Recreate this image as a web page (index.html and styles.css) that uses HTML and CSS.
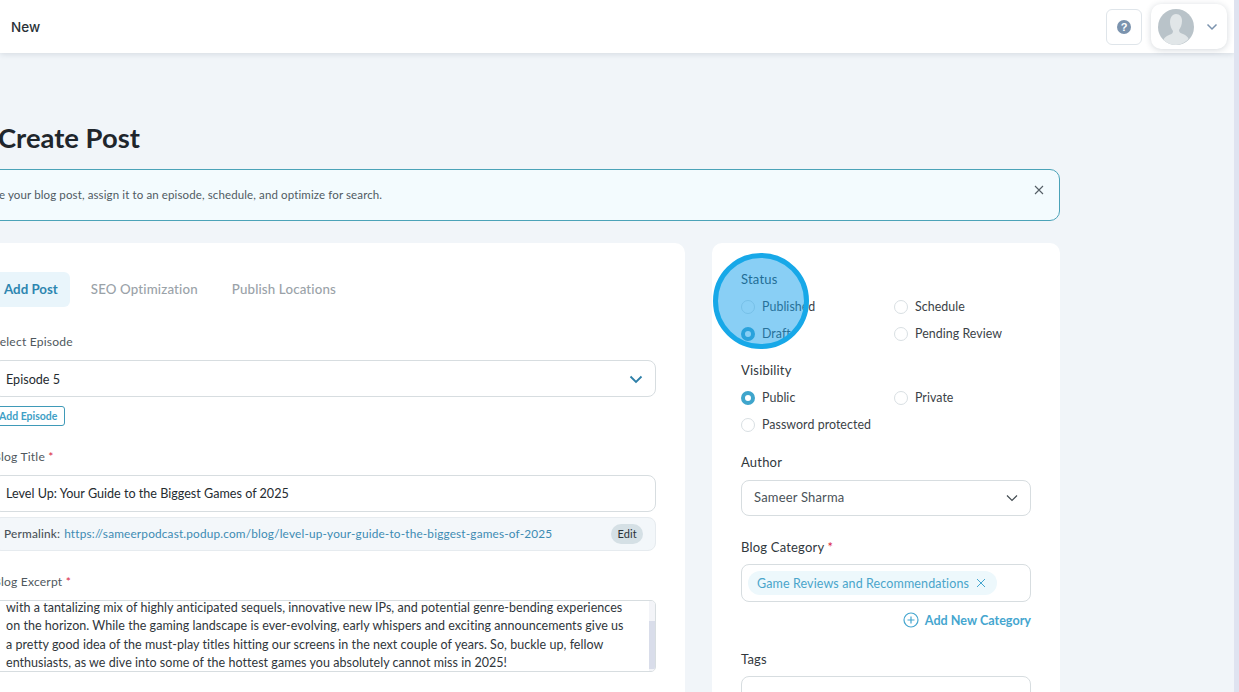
FILE: index.html
```html
<!DOCTYPE html>
<html lang="en">
<head>
  <meta charset="UTF-8" />
  <title>Create Post</title>
  <link rel="stylesheet" href="styles.css">
</head>
<body>
  <div class="app">
    <header class="topbar">
      <span class="crumb-sep">›</span>
      <span class="crumb">New</span>
      <div class="topbar-right">
        <button class="help-btn" aria-label="Help">
          <svg width="16" height="16" viewBox="0 0 16 16">
            <circle cx="8" cy="8" r="7" fill="#7b93ae"/>
            <text x="8" y="12" class="help-mark" text-anchor="middle">?</text>
          </svg>
        </button>
        <div class="user-menu">
          <svg class="avatar" width="36" height="36" viewBox="0 0 36 36">
            <circle cx="18" cy="18" r="18" fill="#b9c3c9"/>
            <path d="M18 5c4 0 6 3 6 7 0 4-1.500 7-3 9 0 2 1 3 4 4 3 1 5 3 5.500 5A18 18 0 0 1 18 36a18 18 0 0 1-12.500-5c.5-2 2.500-4 5.500-5 3-1 4-2 4-4-1.500-2-3-5-3-9 0-4 2-8 6-8z" fill="#e1e6e8"/>
          </svg>
          <svg class="user-caret" width="12" height="8" viewBox="0 0 12 8"><path d="M1.500 1.500 6 6l4.500-4.500" fill="none" stroke="#7b93ae" stroke-width="1.500"/></svg>
        </div>
      </div>
    </header>

    <main class="page">
      <h1 class="page-title">Create Post</h1>

      <div class="notice">
        <p>Create your blog post, assign it to an episode, schedule, and optimize for search.</p>
        <svg width="10" height="10" viewBox="0 0 10 10"><path d="M1 1l8 8m0-8l-8 8" stroke="#555f66" stroke-width="1.100"/></svg>
      </div>

      <div class="columns">
        <section class="card card-main">
          <nav class="tabs">
            <span class="tab active">Add Post</span>
            <span class="tab">SEO Optimization</span>
            <span class="tab">Publish Locations</span>
          </nav>

          <label class="field-label">Select Episode</label>
          <div class="input select">
            <span>Episode 5</span>
            <svg width="14" height="9" viewBox="0 0 14 9"><path d="M1.500 1.500 7 7l5.500-5.500" fill="none" stroke="#2d7fa8" stroke-width="1.800"/></svg>
          </div>
          <button class="btn-outline">Add Episode</button>

          <label class="field-label">Blog Title <span class="req">*</span></label>
          <div class="input"><span>Level Up: Your Guide to the Biggest Games of 2025</span></div>
          <div class="permalink">
            <b>Permalink:</b>
            <a>https://sameerpodcast.podup.com/blog/level-up-your-guide-to-the-biggest-games-of-2025</a>
            <span class="edit-pill">Edit</span>
          </div>

          <label class="field-label">Blog Excerpt <span class="req">*</span></label>
          <div class="textarea">
            <div class="textarea-lines">
              <div>with a tantalizing mix of highly anticipated sequels, innovative new IPs, and potential genre-bending experiences</div>
              <div>on the horizon. While the gaming landscape is ever-evolving, early whispers and exciting announcements give us</div>
              <div>a pretty good idea of the must-play titles hitting our screens in the next couple of years. So, buckle up, fellow</div>
              <div>enthusiasts, as we dive into some of the hottest games you absolutely cannot miss in 2025!</div>
            </div>
            <div class="scroll-track"><div class="scroll-thumb"></div></div>
          </div>
        </section>

        <aside class="card card-side">
          <label class="side-label status-label">Status</label>
          <div class="radio-grid">
            <div class="radio"><i></i>Published</div>
            <div class="radio"><i></i>Schedule</div>
            <div class="radio"><i class="on"></i>Draft</div>
            <div class="radio"><i></i>Pending Review</div>
          </div>

          <label class="side-label vis-label">Visibility</label>
          <div class="radio-grid">
            <div class="radio"><i class="on"></i>Public</div>
            <div class="radio"><i></i>Private</div>
            <div class="radio"><i></i>Password protected</div>
          </div>

          <label class="side-label author-label">Author</label>
          <div class="input side-select">
            <span>Sameer Sharma</span>
            <svg width="12" height="8" viewBox="0 0 12 8"><path d="M1 1.500 6 6.500l5-5" fill="none" stroke="#444c52" stroke-width="1.200"/></svg>
          </div>

          <label class="side-label cat-label">Blog Category <span class="req">*</span></label>
          <div class="tag-box">
            <span class="tag">Game Reviews and Recommendations
              <svg width="10" height="10" viewBox="0 0 10 10"><path d="M1 1l8 8m0-8L1 9" stroke="#45a6cf" stroke-width="1"/></svg>
            </span>
          </div>
          <div class="add-cat">
            <svg width="16" height="16" viewBox="0 0 16 16"><circle cx="8" cy="8" r="7" fill="none" stroke="#45a6cf" stroke-width="1.200"/><path d="M8 4.500v7M4.500 8h7" stroke="#45a6cf" stroke-width="1.200"/></svg>
            Add New Category
          </div>

          <label class="side-label tags-label">Tags</label>
          <div class="input tags-input"></div>
        </aside>
      </div>
    </main>
  </div>

  <div class="click-spot"></div>
  <div class="page-scrollbar"></div>
</body>
</html>
```

FILE: styles.css
```css
* {
  margin: 0;
  padding: 0;
  box-sizing: border-box;
}

html, body {
  height: 692px;
  overflow: hidden;
}

body {
  font-family: 'Lato', 'Noto Sans', sans-serif;
  background: #f1f5f9;
  color: #21272c;
}

.app {
  width: 1234px;
  height: 692px;
  overflow: hidden;
}

/* top bar */
.topbar {
  height: 53px;
  background: white;
  box-shadow: 0 1px 6px rgba(40,60,80,0.15);
  display: flex;
  align-items: center;
  padding-right: 7px;
  position: relative;
}

.crumb-sep {
  width: 11px;
  margin-left: -4px;
  margin-right: 4px;
  color: #8b959d;
  font-size: 14px;
}

.crumb {
  font-family: 'Inter', sans-serif;
  font-size: 13.500px;
  font-weight: 500;
  color: #2a3238;
}

.topbar-right {
  margin-left: auto;
  display: flex;
  align-items: flex-start;
  gap: 9px;
  height: 53px;
  padding-top: 4px;
}

.help-btn {
  width: 36px;
  height: 36px;
  margin-top: 5px;
  background: white;
  border: 1px solid #dfe5ea;
  border-radius: 6px;
  display: flex;
  align-items: center;
  justify-content: center;
}

.help-mark {
  font-family: 'Liberation Sans', sans-serif;
  font-size: 11px;
  font-weight: 700;
  fill: white;
}

.user-menu {
  width: 76px;
  height: 45px;
  background: white;
  border-radius: 10px;
  box-shadow: 0 1px 6px rgba(40,60,80,0.2);
  display: flex;
  align-items: center;
  padding-left: 7px;
  gap: 12px;
}

/* page */
.page {
  margin-left: -36px;
  width: 1096px;
}

.page-title {
  font-size: 27.400px;
  font-weight: 700;
  line-height: 34px;
  margin-top: 68px;
  padding-left: 34px;
  color: #1f262c;
}

.notice {
  margin-top: 14px;
  height: 52px;
  background: #f3fbfe;
  border: 1px solid #4ba3b8;
  border-radius: 10px;
  display: flex;
  align-items: center;
  justify-content: space-between;
  padding: 0 15px 0 6px;
  font-size: 11.500px;
  color: #4f5a62;
  letter-spacing: 0.12px;
}

.notice p {
  padding-bottom: 2px;
}

.notice svg {
  margin-top: -10px;
}

.columns {
  display: flex;
  gap: 27px;
  margin-top: 22px;
  align-items: flex-start;
}

.card {
  background: white;
  border-radius: 10px;
  padding: 29px;
  height: 520px;
}

.card-main {
  width: 721px;
}

.card-side {
  width: 348px;
  padding-top: 28px;
}

/* tabs */
.tabs {
  display: flex;
  gap: 8px;
  margin-bottom: 26px;
}

.tab {
  height: 35px;
  line-height: 35px;
  padding: 0 13px;
  border-radius: 6px;
  font-size: 13.300px;
  font-weight: 500;
  color: #9aa2a8;
  letter-spacing: 0.15px;
}

.tab.active {
  background: #e9f5fb;
  color: #2d86b0;
  font-weight: 700;
  padding: 0 12px 0 11px;
  letter-spacing: 0;
}

.field-label {
  display: block;
  font-size: 12.100px;
  line-height: 18px;
  color: #4f585e;
  letter-spacing: 0.2px;
  margin-bottom: 9px;
}

.req {
  color: #d9263f;
}

.input {
  height: 37px;
  border: 1px solid #d7dde0;
  border-radius: 8px;
  background: white;
  display: flex;
  align-items: center;
  justify-content: space-between;
  padding: 0 12px;
  font-size: 12.600px;
  color: #252b30;
}

.select {
  padding-top: 1px;
}

.btn-outline {
  display: block;
  margin-top: 9px;
  margin-bottom: 22px;
  height: 20px;
  padding: 0 0 0 5px;
  width: 72px;
  text-align: left;
  background: white;
  border: 1px solid #3f9ab8;
  border-radius: 3px;
  font-family: inherit;
  font-size: 10.500px;
  font-weight: 700;
  color: #3f9fc6;
  white-space: nowrap;
}

.permalink {
  margin-top: 5px;
  margin-bottom: 22px;
  height: 34px;
  background: #f3f7fa;
  border: 1px solid #e6ebef;
  border-radius: 8px;
  display: flex;
  align-items: center;
  padding: 0 12px 0 10px;
  font-size: 11.800px;
  letter-spacing: 0.18px;
  gap: 4px;
}

.permalink b {
  font-weight: 500;
  color: #4a5258;
  padding-bottom: 2px;
}

.permalink a {
  color: #3d8bb3;
  padding-bottom: 2px;
}

.edit-pill {
  margin-left: auto;
  height: 20px;
  line-height: 20px;
  padding: 0 6px;
  border-radius: 10px;
  background: #d5e0e5;
  font-size: 11px;
  color: #2c3338;
}

.textarea {
  height: 72px;
  border: 1px solid #d7dde0;
  border-radius: 5px;
  background: white;
  position: relative;
  overflow: hidden;
  font-size: 12.500px;
  line-height: 18.400px;
  letter-spacing: 0.04px;
  color: #30363b;
  padding: 0 12px;
  white-space: nowrap;
}

.textarea-lines {
  margin-top: -2px;
}

.scroll-track {
  position: absolute;
  top: 0;
  right: 0;
  bottom: 0;
  width: 6px;
  background: #f3f4f8;
}

.scroll-thumb {
  margin-top: 20px;
  height: 48px;
  background: #d9ddea;
}

/* side column */
.side-label {
  display: block;
  font-size: 13px;
  line-height: 16px;
  letter-spacing: 0.2px;
  color: #31383d;
}

.status-label {
  margin-bottom: 6px;
}

.vis-label {
  margin-top: 15px;
  margin-bottom: 6px;
}

.author-label {
  margin-top: 16px;
  margin-bottom: 10px;
}

.cat-label {
  margin-top: 23px;
  margin-bottom: 9px;
}

.tags-label {
  margin-top: 23px;
  margin-bottom: 9px;
}

.radio-grid {
  display: grid;
  grid-template-columns: 153px 1fr;
  grid-auto-rows: 27px;
}

.radio {
  display: flex;
  align-items: center;
  gap: 7px;
  font-size: 12.400px;
  letter-spacing: 0.05px;
  color: #3b4247;
}

.radio i {
  width: 14px;
  height: 14px;
  border-radius: 50%;
  border: 1px solid #d9dfe3;
  background: white;
}

.radio i.on {
  border: 4px solid #3fa5cc;
}

.side-select {
  height: 36px;
  padding-bottom: 2px;
  font-size: 13px;
  letter-spacing: 0.18px;
  color: #4a5258;
}

.side-select svg {
  margin-top: 2px;
}

.tag-box {
  height: 38px;
  border: 1px solid #d7dde0;
  border-radius: 8px;
  padding: 6px;
}

.tag {
  display: inline-flex;
  align-items: center;
  gap: 7px;
  height: 24px;
  padding: 0 11px 0 9px;
  border-radius: 12px;
  background: #edf8fc;
  color: #4aa5cb;
  font-size: 12.500px;
  letter-spacing: 0.12px;
  white-space: nowrap;
}

.add-cat {
  margin-top: 10px;
  display: flex;
  justify-content: flex-end;
  align-items: center;
  gap: 6px;
  font-size: 12.600px;
  font-weight: 700;
  color: #45a6cf;
}

.tags-input {
  height: 40px;
}

/* click highlight from the recording */
.click-spot {
  position: absolute;
  left: 713px;
  top: 253px;
  width: 96px;
  height: 96px;
  border-radius: 50%;
  border: 5px solid #17a8e8;
  background: rgba(20,160,235,0.5);
}

.page-scrollbar {
  position: absolute;
  top: 0;
  right: 0;
  width: 5px;
  height: 692px;
  background: #dfe3f0;
}
```
